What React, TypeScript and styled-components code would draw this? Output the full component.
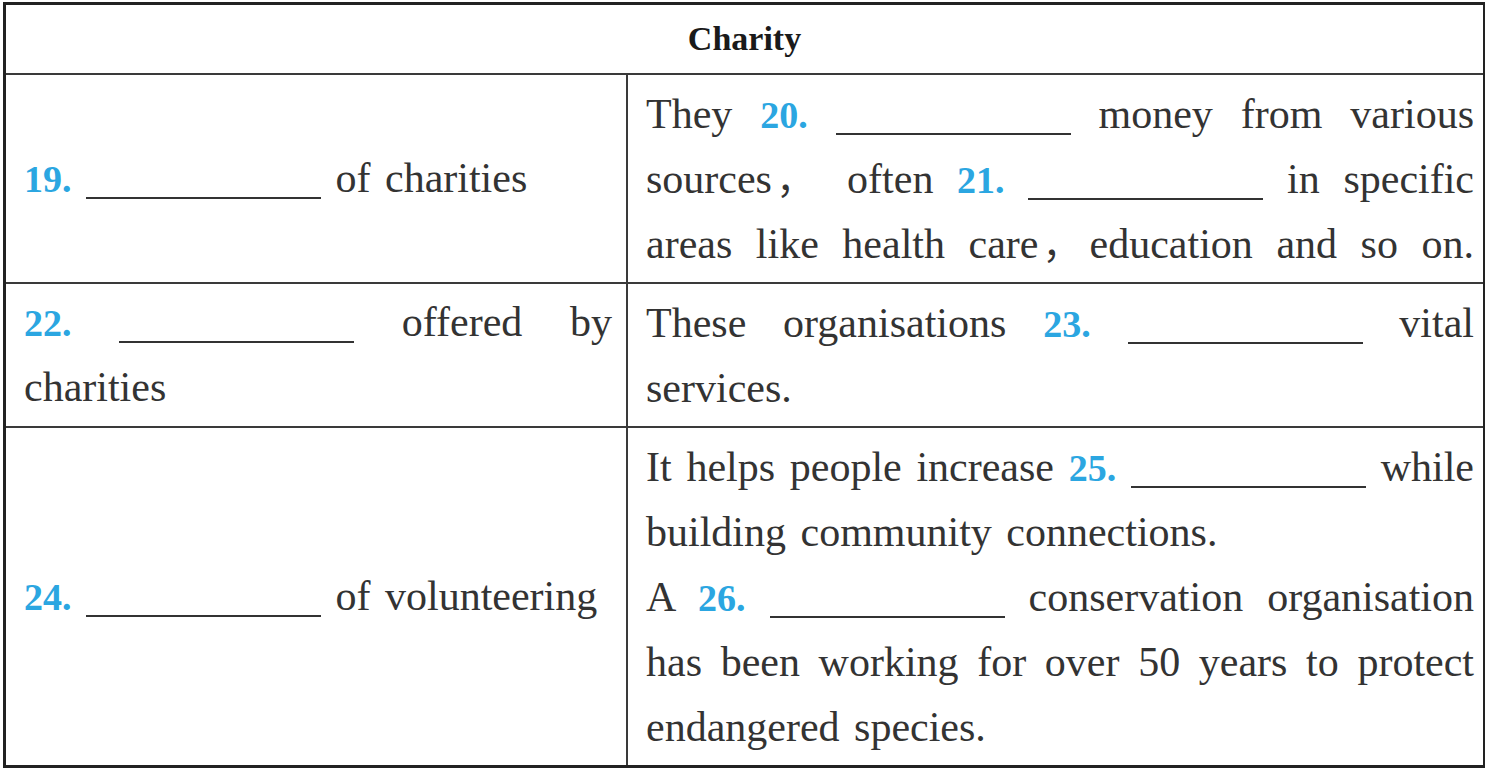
import React from 'react';
import styled, { createGlobalStyle } from 'styled-components';

const GlobalStyle = createGlobalStyle`
  html, body {
    margin: 0;
    padding: 0;
    background: #fff;
  }
  body {
    font-family: 'Liberation Serif', 'Noto Sans CJK SC', serif;
    color: #333;
  }
`;

type Piece = string | { num: number } | { comma: true };

interface LineData {
  parts: Piece[];
  fill?: boolean;
}

interface RowData {
  left: LineData[];
  right: LineData[];
}

const rows: RowData[] = [
  {
    left: [{ parts: [{ num: 19 }, ' of charities'] }],
    right: [
      { parts: ['They ', { num: 20 }, ' money from various'], fill: true },
      { parts: ['sources', { comma: true }, ' often ', { num: 21 }, ' in specific'], fill: true },
      { parts: ['areas like health care', { comma: true }, 'education and so on.'], fill: true },
    ],
  },
  {
    left: [{ parts: [{ num: 22 }, ' offered by'], fill: true }, { parts: ['charities'] }],
    right: [
      { parts: ['These organisations ', { num: 23 }, ' vital'], fill: true },
      { parts: ['services.'] },
    ],
  },
  {
    left: [{ parts: [{ num: 24 }, ' of volunteering'] }],
    right: [
      { parts: ['It helps people increase ', { num: 25 }, ' while'], fill: true },
      { parts: ['building community connections.'] },
      { parts: ['A ', { num: 26 }, ' conservation organisation'], fill: true },
      { parts: ['has been working for over 50 years to protect'], fill: true },
      { parts: ['endangered species.'] },
    ],
  },
];

function renderPiece(p: Piece, i: number) {
  if (typeof p === 'string') return <React.Fragment key={i}>{p}</React.Fragment>;
  if ('comma' in p)
    return (
      <Comma key={i} lang="zh-Hans">
        ，
      </Comma>
    );
  return (
    <React.Fragment key={i}>
      <Num>{p.num}.</Num> <Blank />
    </React.Fragment>
  );
}

function renderLine(line: LineData, key: number) {
  return (
    <Line key={key} $fill={!!line.fill}>
      {line.parts.map(renderPiece)}
    </Line>
  );
}

export default function App() {
  return (
    <>
      <GlobalStyle />
      <Table>
        <Header>Charity</Header>
        {rows.map((row, i) => (
          <Row key={i} $last={i === rows.length - 1}>
            <LeftCell>{row.left.map(renderLine)}</LeftCell>
            <RightCell>{row.right.map(renderLine)}</RightCell>
          </Row>
        ))}
      </Table>
    </>
  );
}

const Table = styled.div`
  margin: 2px 0 0 3px;
  width: 1482px;
  box-sizing: border-box;
  border: 3px solid #222;
  border-right-width: 2px;
  background: #fff;
`;

const Header = styled.div`
  height: 68px;
  display: flex;
  align-items: center;
  justify-content: center;
  font-family: 'Liberation Serif', serif;
  font-weight: 700;
  font-size: 34px;
  color: #1a1a1a;
  border-bottom: 2px solid #3a3a3a;
`;

const Row = styled.div<{ $last: boolean }>`
  display: grid;
  grid-template-columns: 622px 1fr;
  border-bottom: ${props => (props.$last ? 'none' : '2px solid #3a3a3a')};
`;

const LeftCell = styled.div`
  display: flex;
  flex-direction: column;
  justify-content: center;
  padding: 6px 14px 6px 18px;
  border-right: 2px solid #3a3a3a;
`;

const RightCell = styled.div`
  display: flex;
  flex-direction: column;
  justify-content: center;
  padding: 7px 9px 5px 18px;
`;

const Line = styled.div<{ $fill: boolean }>`
  font-size: 42px;
  line-height: 65px;
  height: 65px;
  word-spacing: 4px;
  text-align: justify;
  text-align-last: ${props => (props.$fill ? 'justify' : 'left')};
`;

const Num = styled.span`
  color: #2ba6e1;
  font-weight: 700;
  font-size: 38px;
`;

const Comma = styled.span`
  font-family: 'Noto Sans CJK SC', sans-serif;
  font-size: 38px;
  line-height: 1;
  margin-left: -5px;
`;

const Blank = styled.span`
  display: inline-block;
  width: 235px;
  height: 0;
  border-bottom: 2px solid #333;
  vertical-align: -7px;
`;
